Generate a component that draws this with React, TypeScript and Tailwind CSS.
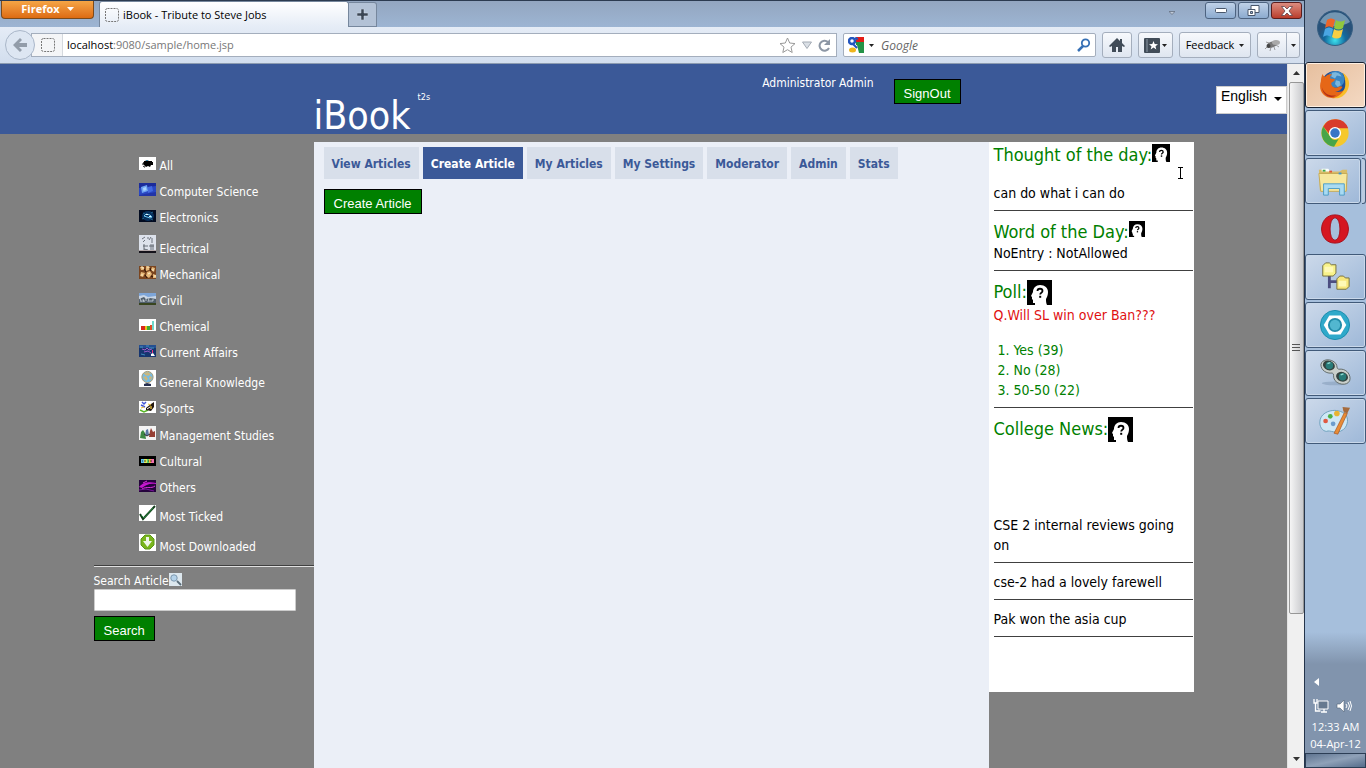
import { useState, type ReactNode } from "react";

function Thumb({ h, bg, children }: { h: number; bg: string; children: ReactNode }) {
  return (
    <svg aria-hidden="true" width={17} height={h} viewBox={`0 0 17 ${h}`} className="mb-[4px] shrink-0">
      <rect width="17" height={h} fill={bg} />
      {children}
    </svg>
  );
}

const categories: { name: string; icon: ReactNode }[] = [
  {
    name: "All",
    icon: (
      <Thumb h={13} bg="#fff">
        <path d="M6 4l2-1 2 1 3 0v1h1v3h-2l-1 2-2-1-2 1-2-2-1-2z" fill="#000" />
        <path d="M6 4L4 6v2l1 2h2M5 5l1-1" stroke="#000" strokeDasharray="2 1" fill="none" />
        <path d="M7 3.500h2" stroke="#3c9ac8" strokeWidth=".8" />
      </Thumb>
    ),
  },
  {
    name: "Computer Science",
    icon: (
      <Thumb h={13} bg="#2a48c4">
        <path d="M0 0h17v3L0 5z" fill="#1b2b9a" />
        <path d="M2 4l6-2 1 6-6 2z" fill="#6ea4f4" />
        <path d="M9 4l4-1 1 5-5 2z" fill="#4369e0" />
        <path d="M0 12l17-3v4H0z" fill="#2235a8" />
        <path d="M4 5l3-1 .5 3-3 1z" fill="#a9d2ff" />
      </Thumb>
    ),
  },
  {
    name: "Electronics",
    icon: (
      <Thumb h={12} bg="#020b20">
        <ellipse cx="9" cy="6" rx="6" ry="5" fill="#08305c" />
        <path d="M5 6l2-2 4 1 2 2-2 1-3-1z" stroke="#6bc4f2" fill="none" />
        <path d="M4 3l2 1M12 9l2 1M3 9l2-1M12 3l2-1" stroke="#2b7fae" fill="none" strokeWidth=".7" />
        <path d="M7 4h2v1H7zM10 6h2v1h-2z" fill="#e4faff" />
      </Thumb>
    ),
  },
  {
    name: "Electrical",
    icon: (
      <Thumb h={18} bg="#dde2ec">
        <path d="M5 9v6M4 11h5M8 3h2M13 3v5M12 9v6M10 11h5M14 9v6M3 4l3-2M6 5l-2 2M10 5l2-3M5 14l4 1" stroke="#4f5560" fill="none" strokeWidth=".8" />
        <path d="M0 15h17v1H0z" fill="#b4a9aa" />
        <path d="M0 16h17v2H0z" fill="#14121a" />
      </Thumb>
    ),
  },
  {
    name: "Mechanical",
    icon: (
      <Thumb h={13} bg="#7a4520">
        <path d="M1 1h4v3H2zM7 0l4 1-1 3-3 1zM13 1l3 1-1 4-3-2zM2 6l4 1-2 4-3-1zM8 6l3-1 2 3-3 4-3-2zM14 8l3 1v3h-3z" fill="#e6b878" />
        <path d="M2 1h2v2M8 1h2M14 3v2M3 8v2M9 8l2-1M15 10h2" stroke="#fff0cc" fill="none" />
        <path d="M5 3l2 3M11 2l1 3M6 9l2 3M12 10l2 1" stroke="#2d1206" />
      </Thumb>
    ),
  },
  {
    name: "Civil",
    icon: (
      <Thumb h={12} bg="#7da5d8">
        <path d="M0 3l5-1 4 2 8-1v4H0z" fill="#c8d5e5" />
        <path d="M0 6l5-2 2 2 4-1 6 1v5H0z" fill="#52606d" />
        <path d="M1 5l1 4M4 6l1 3M7 4v4M10 5l-1 4M14 6v2M2 8h4M10 8h4" stroke="#dce4e9" strokeWidth=".7" />
        <path d="M0 10h17v2H0z" fill="#39451f" />
      </Thumb>
    ),
  },
  {
    name: "Chemical",
    icon: (
      <Thumb h={12} bg="#fff">
        <path d="M2 7h4v4H2z" fill="#d8281c" />
        <path d="M6 7h2v4H6z" fill="#e7c315" />
        <path d="M8 7h3v4H8z" fill="#3daa38" />
        <path d="M11 6h2v5h-2z" fill="#e04c25" />
        <path d="M13 2h2v9h-2z" fill="#6fd8ca" />
      </Thumb>
    ),
  },
  {
    name: "Current Affairs",
    icon: (
      <Thumb h={12} bg="#16356f">
        <path d="M0 0h17v3H0z" fill="#254f91" />
        <path d="M3 4l3 1 2-2 2 2 3-1M5 7l4-1 3 2" stroke="#9b5cc8" fill="none" />
        <path d="M1 2h3M7 1h3M2 9l4 1M10 3h5" stroke="#4aa2d0" strokeWidth=".8" />
        <path d="M13 5h1v3h-1z" fill="#f1377d" />
        <path d="M12 9l2-1 2 3h-4z" fill="#fff" />
      </Thumb>
    ),
  },
  {
    name: "General Knowledge",
    icon: (
      <Thumb h={17} bg="#fff">
        <circle cx="8.500" cy="7" r="5.600" fill="#75bce6" stroke="#a99b74" />
        <path d="M5 3l4-1 3 2-3 2-3-1zM4 7l3-1 2 3-2 2zM11 6l2 1-1 3-2-1z" fill="#cab77e" />
        <path d="M5 14l3-1 4 1v2H5z" fill="#27304f" />
      </Thumb>
    ),
  },
  {
    name: "Sports",
    icon: (
      <Thumb h={12} bg="#fff">
        <path d="M3 1l2 2 2-2M2 4l4 2" stroke="#4357d6" strokeWidth="1.500" fill="none" />
        <path d="M1 9l4 2 4-2" stroke="#5cb82c" strokeWidth="1.500" fill="none" />
        <path d="M7 7l5-4 3-2v5l-3 4-5-1z" fill="#231810" />
        <path d="M2 7l3-1M9 3l3 1M12 5v3" stroke="#eec33a" strokeWidth="1.300" />
        <path d="M8 8l3-2" stroke="#fff" />
      </Thumb>
    ),
  },
  {
    name: "Management Studies",
    icon: (
      <Thumb h={14} bg="#f4f4f4">
        <path d="M1 12l1-6 2-2 2 3 1 6z" fill="#3e8945" />
        <path d="M6 10l1-6 2-1 1 6z" fill="#5a77a3" />
        <path d="M10 11l1-6 1-3 2 4 2-1v6z" fill="#963f35" />
        <path d="M5 8l3 2 3-2" stroke="#333" fill="none" />
      </Thumb>
    ),
  },
  {
    name: "Cultural",
    icon: (
      <Thumb h={10} bg="#000">
        <path d="M2 3h3v4H2z" fill="#60c4ed" />
        <path d="M5 3h3v4H5z" fill="#dfe85d" />
        <path d="M8 3h2v4H8z" fill="#60d56b" />
        <path d="M10 3h2v4h-2z" fill="#f2b743" />
        <path d="M12 3h3v4h-3z" fill="#f472af" />
        <path d="M3 5h1M6 4v2M9 5h1M12 4v2" stroke="#000" strokeWidth=".7" />
      </Thumb>
    ),
  },
  {
    name: "Others",
    icon: (
      <Thumb h={12} bg="#25043c">
        <path d="M0 7C5 1 12 2 17 3v1C10 3 7 5 3 8z" fill="#c516cf" />
        <path d="M3 9c5-3 9 0 13-3M4 3l4-2" stroke="#e02fe0" fill="none" />
        <path d="M0 10l7-1 8 2" stroke="#7c129e" fill="none" />
      </Thumb>
    ),
  },
  {
    name: "Most Ticked",
    icon: (
      <Thumb h={16} bg="#fff">
        <path d="M1 9l3 5L16 1" fill="none" stroke="#123c1a" strokeWidth="2" />
        <path d="M2 10l3 3L14 3" fill="none" stroke="#23863b" />
      </Thumb>
    ),
  },
  {
    name: "Most Downloaded",
    icon: (
      <Thumb h={17} bg="#fff">
        <path d="M6 1h5l4 4v6l-4 4H6l-4-4V5z" fill="#79b51c" stroke="#5a961a" />
        <path d="M7 3h3v4h3l-4.500 6L4 7h3z" fill="#eef6e8" />
      </Thumb>
    ),
  },
];

function HeadIcon({ size }: { size: number }) {
  return (
    <svg
      aria-hidden="true"
      width={size}
      height={size}
      viewBox="0 0 25 25"
      className={`shrink-0 ${size < 25 ? "mt-px" : ""}`}
    >
      <rect width="25" height="25" fill="#000" />
      <path d="M8 25v-2H6v-3l-1-1v-2l-1-1 2-4C6 8 9 5 13 5c5 0 8 3 8 7 0 3-1 5-2 7 0 2 0 4 1 6z" fill="#fff" />
      <path d="M10.500 11c0-3 5-3 5 0 0 2-2.300 1.500-2.300 3.500" fill="none" stroke="#000" strokeWidth="1.800" />
      <rect x="12.200" y="15.800" width="2" height="2" fill="#000" />
    </svg>
  );
}

function Heading({ children, icon }: { children: ReactNode; icon: number }) {
  return (
    <h2 className="flex items-start text-[18px] leading-[23px] text-[#008000]">
      {children}
      <HeadIcon size={icon} />
    </h2>
  );
}

const rule = "mt-[7px] border-0 border-t border-[#404040]";
const greenButton =
  "h-[25px] border border-black bg-[#008000] px-[9px] pt-[4px] font-['Liberation_Sans',sans-serif] text-[13px] leading-[19px] text-white";
const toolButton =
  "flex h-[26px] items-center justify-center rounded-[3px] border border-[#a4aebd] bg-linear-to-b from-[#f7f9fc] to-[#dfe6f0]";

function DashedPage() {
  return (
    <svg aria-hidden="true" width="14" height="14" viewBox="0 0 14 14" className="shrink-0">
      <rect x=".5" y=".5" width="13" height="13" rx="2" fill="none" stroke="#777" strokeDasharray="2 1" />
    </svg>
  );
}

function Caret() {
  return (
    <svg aria-hidden="true" width="5" height="3" viewBox="0 0 5 3" className="shrink-0">
      <path d="M0 0h5L2.500 3z" fill="#222" />
    </svg>
  );
}

function TitleBar() {
  return (
    <div className="flex h-[27px] items-start border-t border-[#2c3b50] bg-linear-to-b from-[#93a6c0] to-[#9db5d3]">
      <button className="ml-px flex h-[18px] w-[93px] items-center justify-center gap-[7px] rounded-b-[4px] border border-t-0 border-[#7b4a1c] bg-linear-to-b from-[#f5a545] to-[#dd6b11] pb-px text-[11px] font-bold text-white">
        Firefox
        <svg aria-hidden="true" width="7" height="4" viewBox="0 0 7 4"><path d="M0 0h7L3.500 4z" fill="#fff" /></svg>
      </button>
      <div className="ml-[5px] flex h-[26px] w-[250px] items-center gap-[4px] rounded-t-[3px] border border-b-0 border-[#76879d] bg-linear-to-b from-white to-[#e5ecf6] pt-px pl-[5px] text-[11px] text-black">
        <DashedPage />
        iBook - Tribute to Steve Jobs
      </div>
      <button aria-label="New tab" className="mt-px flex h-[25px] w-[28px] items-center justify-center rounded-tr-[3px] border border-l-0 border-[#76879d] bg-[#b3c2d6]">
        <svg width="11" height="11" viewBox="0 0 11 11"><path d="M4 0h3v4h4v3H7v4H4V7H0V4h4z" fill="#3b4654" stroke="#dbe3ed" strokeWidth=".5" /></svg>
      </button>
      <div className="ml-auto flex items-start gap-[2px] pt-px pr-[2px]">
        <svg aria-hidden="true" width="6" height="4" viewBox="0 0 6 4" className="mt-[9px] mr-[28px]"><path d="M0 .5h6L3 3.500z" fill="#c0cbd9" stroke="#5b6675" strokeWidth=".7" /></svg>
        <button aria-label="Minimize" className="flex h-[17px] w-[31px] items-center justify-center rounded-[3px] border border-[#4d6380] bg-linear-to-b from-[#bfd1e8] to-[#8cabcf]">
          <svg width="12" height="6" viewBox="0 0 12 6"><rect x=".5" y=".5" width="11" height="4" rx="1" fill="#fff" stroke="#48566b" /></svg>
        </button>
        <button aria-label="Restore" className="flex h-[17px] w-[31px] items-center justify-center rounded-[3px] border border-[#4d6380] bg-linear-to-b from-[#bfd1e8] to-[#8cabcf]">
          <svg width="13" height="12" viewBox="0 0 13 12"><path d="M4 .5h8v7H4z" fill="#fff" stroke="#48566b" /><path d="M1 4.500h7v6H1z" fill="#fff" stroke="#48566b" /><path d="M3.500 6.500h2v2h-2z" fill="#9ab2d0" stroke="#48566b" /></svg>
        </button>
        <button aria-label="Close" className="flex h-[17px] w-[31px] items-center justify-center rounded-[3px] border border-[#5a1d1d] bg-linear-to-b from-[#dc8c80] to-[#b93b2b]">
          <svg width="12" height="10" viewBox="0 0 12 10"><path d="M.5.5h3L6 3 8.500.5h3L8 5l3.500 4.500h-3L6 7 3.500 9.500h-3L4 5z" fill="#fff" stroke="#5f4149" strokeWidth=".8" /></svg>
        </button>
      </div>
    </div>
  );
}

function Toolbar() {
  return (
    <div className="flex h-[37px] items-center border-b border-[#8c9bb0] bg-linear-to-b from-[#e5ecf6] to-[#d2deee] pr-[4px]">
      <button aria-label="Back" className="z-10 ml-[5px] flex size-[30px] shrink-0 items-center justify-center rounded-full border border-[#aab7c9] bg-[#dde6f2]">
        <svg width="16" height="16" viewBox="0 0 16 16"><path d="M8 1L1 8l7 7 2-2-3-3h8V6H7l3-3z" fill="#929ca9" /></svg>
      </button>
      <div className="-ml-[4px] flex h-[24px] min-w-0 flex-1 items-center border border-[#a4aebd] bg-white">
        <span className="flex h-full w-[31px] shrink-0 items-center justify-end border-r border-[#d5d9de] bg-[#f4f5f7] pr-[7px]"><DashedPage /></span>
        <span className="flex-1 pt-px pl-[4px] text-[11px] text-[#777]"><span className="text-black">localhost</span>:9080/sample/home.jsp</span>
        <svg aria-hidden="true" width="17" height="17" viewBox="0 0 17 17"><path d="M8.500 1l2.200 5 5.300.6-4 3.500 1.200 5.400-4.700-2.800-4.700 2.800L5 10.100 1 6.600 6.300 6z" fill="#fff" stroke="#999" /></svg>
        <svg aria-hidden="true" width="10" height="8" viewBox="0 0 10 8" className="ml-[6px]"><path d="M.5 1h9L5 7.500z" fill="#dbe0e6" stroke="#a4abb4" /></svg>
        <svg aria-hidden="true" width="13" height="13" viewBox="0 0 13 13" className="mr-[5px] ml-[6px]"><path d="M10 3A5 5 0 1 0 11 9" fill="none" stroke="#8d97a5" strokeWidth="2" /><path d="M12 0v6H6z" fill="#8d97a5" /></svg>
      </div>
      <div className="ml-[6px] flex h-[24px] w-[253px] items-center rounded-[2px] border border-[#a4aebd] bg-white px-[4px]">
        <svg aria-hidden="true" width="16" height="16" viewBox="0 0 16 16" className="shrink-0">
          <path d="M8 0h8v5H8z" fill="#e51c16" /><path d="M8 5h8v11H8z" fill="#249347" /><path d="M0 8h9l2 8H7z" fill="#fff" />
          <circle cx="4" cy="4" r="3" fill="none" stroke="#2456be" strokeWidth="2.500" /><path d="M5 7l4 4M7 1l3 1" stroke="#2456be" strokeWidth="2" /><ellipse cx="4.500" cy="13" rx="3.500" ry="2.500" fill="#efb51c" />
        </svg>
        <span className="ml-[5px] flex"><Caret /></span>
        <input aria-label="Search Google" placeholder="Google" className="ml-[7px] min-w-0 flex-1 pt-px text-[12px] italic outline-none placeholder:text-[#666]" />
        <svg aria-hidden="true" width="14" height="14" viewBox="0 0 14 14" className="shrink-0"><circle cx="8.500" cy="5" r="3.700" fill="none" stroke="#3670b5" strokeWidth="1.800" /><path d="M6 8l-5 5" stroke="#3670b5" strokeWidth="2.500" /></svg>
      </div>
      <button aria-label="Home" className={`${toolButton} ml-[6px] w-[30px]`}>
        <svg width="16" height="14" viewBox="0 0 16 14"><path d="M8 0l3 3V1h2v4l3 3-1 1-2-1v6H9V9H7v5H3V8L1 9 0 8z" fill="#414c58" /></svg>
      </button>
      <button aria-label="Bookmarks" className={`${toolButton} ml-[6px] w-[35px] gap-[2px]`}>
        <svg width="16" height="15" viewBox="0 0 16 15"><rect width="16" height="15" rx="1" fill="#414c58" /><path d="M3 1v13" stroke="#8d99a6" /><path d="M9.500 3l1.200 3 3.300.2-2.500 2 .8 3.200-2.800-1.800-2.800 1.800.8-3.200L5 6.200 8.300 6z" fill="#fff" /></svg>
        <Caret />
      </button>
      <button className={`${toolButton} ml-[6px] w-[72px] gap-[5px] text-[11px] text-black`}>Feedback <Caret /></button>
      <div className="ml-[6px] flex">
        <button aria-label="Firebug" className={`${toolButton} w-[30px] rounded-r-none`}>
          <svg width="17" height="13" viewBox="0 0 17 13"><path d="M5 4L2 3M3 8l-2 2M7 8l-1 4M10 8l1 3M12 6l3 2" stroke="#888" strokeWidth=".8" /><ellipse cx="8" cy="5.500" rx="5" ry="2.800" fill="#777" transform="rotate(-20 8 5.500)" /><ellipse cx="12" cy="3.500" rx="4" ry="2.500" fill="#a9a9a9" /><circle cx="4.500" cy="7" r="2" fill="#444" /></svg>
        </button>
        <button aria-label="Firebug options" className={`${toolButton} -ml-px w-[14px] rounded-l-none`}><Caret /></button>
      </div>
    </div>
  );
}

function Header() {
  return (
    <header className="grid h-[70px] grid-cols-[minmax(0,1fr)_minmax(0,1100px)_minmax(0,1fr)] bg-[#3b5998] text-white">
      <div className="col-start-2 flex items-start pl-[220px]">
        <h1 className="flex items-start pt-[28px] text-[39px] leading-[48px]">
          iBook<sup className="top-0 pl-[7px] text-[9px] leading-[10px]">t2s</sup>
        </h1>
        <div className="ml-auto flex items-start gap-[20px] pt-[15px] pr-[233px]">
          <span className="text-[12px] leading-[8px]">Administrator Admin</span>
          <button className={greenButton}>SignOut</button>
        </div>
      </div>
      <div className="col-start-3 flex items-start justify-end pt-[20px]">
        <div className="relative">
          <select aria-label="Language" className="h-[28px] w-[71px] appearance-none border border-[#ccc] bg-white pb-[8px] pl-[4px] font-['Liberation_Sans',sans-serif] text-[14px] leading-[18px] text-black">
            <option>English</option>
          </select>
          <svg aria-hidden="true" width="8" height="4" viewBox="0 0 8 4" className="pointer-events-none absolute top-[13px] right-[5px]"><path d="M0 0h8L4 4z" fill="#000" /></svg>
        </div>
      </div>
    </header>
  );
}

function Sidebar() {
  return (
    <aside className="w-[220px] shrink-0 text-[12px] text-white">
      <ul className="pt-[6px] pl-[45px]">
        {categories.map((c) => (
          <li key={c.name}>
            <a href="#" className="flex min-h-[26px] items-end gap-[4px] pt-[9px] leading-[15px]">
              {c.icon}
              {c.name}
            </a>
          </li>
        ))}
      </ul>
      <hr className="mt-[10px] border-0 border-t border-b border-t-[#404040] border-b-[#e0e0e0]" />
      <form className="pt-[6px]" onSubmit={(e) => e.preventDefault()}>
        <label htmlFor="article-search" className="flex items-start leading-[16px]">
          Search Article
          <svg aria-hidden="true" width="13" height="13" viewBox="0 0 13 13"><rect width="13" height="13" fill="#dce7ee" /><circle cx="5" cy="5" r="3.200" fill="#b5d3ea" stroke="#7d98ae" /><path d="M8 8l4 4" stroke="#596b78" strokeWidth="1.800" /></svg>
        </label>
        <input id="article-search" className="block h-[22px] w-[202px] rounded-[1px] border border-[#ccc] bg-white px-[3px] text-black outline-none" />
        <button className={`${greenButton} mt-[5px]`}>Search</button>
      </form>
    </aside>
  );
}

const tabs = ["View Articles", "Create Article", "My Articles", "My Settings", "Moderator", "Admin", "Stats"];

function Main() {
  const [active, setActive] = useState("Create Article");
  return (
    <main className="min-w-0 flex-1 bg-[#ebeff7] px-[10px] pt-[5px]">
      <nav className="flex flex-wrap gap-[4px]">
        {tabs.map((t) => (
          <button
            key={t}
            onClick={() => setActive(t)}
            className={`h-[32px] px-[8px] pt-[2px] text-[12px] font-bold ${t === active ? "bg-[#3b5998] text-white" : "bg-[#d8dfea] text-[#3b5998]"}`}
          >
            {t}
          </button>
        ))}
      </nav>
      <button className={`${greenButton} mt-[10px]`}>Create Article</button>
    </main>
  );
}

function News() {
  return (
    <aside className="relative flex w-[205px] shrink-0 flex-col gap-[9px] self-start bg-white pt-px pr-px pb-[55px] pl-[5px] text-[14px] leading-[20px] text-black">
      <section>
        <Heading icon={18}>Thought of the day:</Heading>
        <p className="pt-[17px]">can do what i can do</p>
        <hr className={rule} />
      </section>
      <section>
        <Heading icon={16}>Word of the Day:</Heading>
        <p>NoEntry : NotAllowed</p>
        <hr className={rule} />
      </section>
      <section>
        <Heading icon={25}>Poll:</Heading>
        <p className="text-[#e01010]">Q.Will SL win over Ban???</p>
        <ol className="list-outside list-decimal pt-[15px] pl-[20px] text-[#008000]">
          <li>Yes (39)</li>
          <li>No (28)</li>
          <li>50-50 (22)</li>
        </ol>
        <hr className={rule} />
      </section>
      <section>
        <Heading icon={25}>College News:</Heading>
        <p className="pt-[73px]">CSE 2 internal reviews going on</p>
        <hr className={rule} />
      </section>
      <section>
        <p>cse-2 had a lovely farewell</p>
        <hr className={rule} />
      </section>
      <section>
        <p>Pak won the asia cup</p>
        <hr className={rule} />
      </section>
      <svg aria-hidden="true" width="5" height="12" viewBox="0 0 5 12" className="pointer-events-none absolute top-[25px] right-[11px]"><path d="M0 .5h5M2.500 .5v11M0 11.500h5" stroke="#000" /></svg>
    </aside>
  );
}

function ScrollBar() {
  return (
    <div aria-hidden="true" className="flex w-[17px] shrink-0 flex-col items-center border-l border-[#e3e3e3] bg-[#f0f0f0]">
      <svg width="7" height="4" viewBox="0 0 7 4" className="mt-[7px] mb-[7px] shrink-0"><path d="M0 4h7L3.500 0z" fill="#333" /></svg>
      <div className="flex w-[15px] grow-[526] basis-0 flex-col items-center justify-center gap-[2px] rounded-[2px] border border-[#979797] bg-linear-to-r from-[#f5f5f5] to-[#c9cacd]">
        <i className="h-px w-[8px] bg-[#555]" />
        <i className="h-px w-[8px] bg-[#555]" />
        <i className="h-px w-[8px] bg-[#555]" />
      </div>
      <div className="grow-[142] basis-0" />
      <svg width="7" height="4" viewBox="0 0 7 4" className="mb-[7px] shrink-0"><path d="M0 0h7L3.500 4z" fill="#333" /></svg>
    </div>
  );
}

const frame = "border border-[#415a79] bg-linear-to-br from-[#ccd9ea] to-[#9eb8d8] shadow-[inset_0_0_0_1px_#c9d8ea]";

const apps: { name: string; frame: string; art: ReactNode }[] = [
  {
    name: "Firefox",
    frame: "border border-[#172030] bg-linear-to-br from-[#e6bf9e] to-[#f4d9c3] shadow-[inset_0_0_0_1px_#fff0e2]",
    art: (
      <>
        <circle cx="17" cy="16" r="14" fill="#1d4d96" />
        <circle cx="18" cy="11" r="9" fill="#3a86c4" />
        <path d="M14 4c4-2 9 1 10 4l-5-1-2 3-4-2zM18 12l4 1 1 4-3 2-3-3z" fill="#a7d9ee" opacity=".6" />
        <path d="M4 5c0 2 1 3 3 3 2-2 4-3 7-2-2 1-3 3-2 4l5 1c0 2-3 3-4 4 0 3 2 5 5 5 3 0 4-3 7-1-2 3-4 5-8 5 6 2 13-2 13-8 1 7-6 15-15 15C4 31-1 22 2 13c0-3 1-6 2-8z" fill="#e66717" />
        <path d="M25 4c7 4 9 12 5 19-3 6-9 9-15 8 8-2 13-8 13-15 0-5-1-9-3-12z" fill="#f9bd28" />
        <path d="M3 19c2 7 8 10 15 9-4 4-14 1-15-9z" fill="#b43018" />
      </>
    ),
  },
  {
    name: "Chrome",
    frame,
    art: (
      <>
        <circle cx="17" cy="17" r="14.500" fill="#f5c82c" />
        <path d="M4.500 10A14.500 14.500 0 0 1 31 12H17c-4 0-6 4-5 7z" fill="#d83b2b" />
        <path d="M4.500 10 12 21c2 4 6 4 9 2l-5 8.500A14.500 14.500 0 0 1 4.500 10z" fill="#48a548" />
        <circle cx="17" cy="17" r="6.500" fill="#fff" />
        <circle cx="17" cy="17" r="5" fill="#3976c6" />
      </>
    ),
  },
  {
    name: "Explorer",
    frame,
    art: (
      <>
        <path d="M2 5h10l2 2h10l3-2h5v22H3z" fill="#d9bd66" />
        <path d="M2 9h30l-1 19H4z" fill="#f7e89e" stroke="#c4a954" />
        <path d="M5 4h7l2 3H5z" fill="#fff" /><path d="M6 5h3v2H6z" fill="#3da746" /><path d="M13 6h3v2h-3z" fill="#e05635" /><path d="M23 8h3v2h-3z" fill="#3b97d6" />
        <path d="M7 32V20h22v12h-5v-7H12v7z" fill="#a9dbf2" stroke="#4b9cc5" />
      </>
    ),
  },
  {
    name: "Opera",
    frame: "border border-transparent",
    art: (
      <path fillRule="evenodd" d="M17 2c19 0 19 30 0 30S-2 2 17 2zm0 3c-7 0-7 24 0 24s7-24 0-24z" fill="#d51621" stroke="#a60b16" />
    ),
  },
  {
    name: "File transfer",
    frame,
    art: (
      <>
        <path d="M11 14v15M10 22h10" stroke="#4b4d80" strokeWidth="3" />
        <path d="M4 5l3-3h4l2 2h5v9l-3 3H4z" fill="#f8f28a" stroke="#746e3c" />
        <path d="M19 19l3-3h4l2 2h4v9l-3 3H19z" fill="#f8e77b" stroke="#746e3c" />
        <path d="M6 6h9v6H6zM21 21h8v6h-8z" fill="#fff9b6" />
      </>
    ),
  },
  {
    name: "Hex tool",
    frame,
    art: (
      <>
        <circle cx="17" cy="17" r="15.500" fill="#2fa9ca" stroke="#178bac" />
        <path d="M11 7h12l6 10-6 10H11L5 17z" fill="#fff" />
        <circle cx="17" cy="17" r="6.500" fill="#52b7d0" stroke="#248ca9" strokeWidth="2" />
      </>
    ),
  },
  {
    name: "Binoculars",
    frame,
    art: (
      <>
        <ellipse cx="17" cy="28" rx="14" ry="2" fill="#8098b3" opacity=".5" />
        <path d="M2 8c1-6 11-7 16-1 2 3 0 5 3 6 7-1 12 4 12 10 0 7-11 8-16 2-3-4 0-7-3-8C8 18 2 14 2 8z" fill="#c9cfcb" stroke="#5e6766" />
        <ellipse cx="10.500" cy="9" rx="6.500" ry="5" fill="#34423f" transform="rotate(20 10.500 9)" />
        <ellipse cx="24.500" cy="21" rx="6.500" ry="5" fill="#34423f" transform="rotate(20 24.500 21)" />
        <circle cx="11" cy="9" r="4" fill="#287b78" /><circle cx="25" cy="21" r="4" fill="#287b78" />
        <path d="M9 7l3-1M23 19l3-1" stroke="#91dad1" strokeWidth="1.500" />
      </>
    ),
  },
  {
    name: "Paint",
    frame,
    art: (
      <>
        <path d="M1 17C2 7 17 2 27 9c5 4 4 13-1 17-8 6-14 0-18 2-4 0-8-5-7-11z" fill="#cfe8f5" stroke="#6c9fbc" />
        <circle cx="7" cy="17" r="2.500" fill="#df5b43" /><circle cx="12" cy="12" r="2.500" fill="#4caf45" /><circle cx="19" cy="9" r="3" fill="#e9b431" /><circle cx="15" cy="20" r="2.500" fill="#6d9dcc" />
        <path d="M16 30l11-22 3 1-10 22z" fill="#e88c37" stroke="#a5531d" strokeWidth=".7" />
        <path d="M26 7l-1-5 8 1-3 6z" fill="#a66b3c" />
      </>
    ),
  },
];

function TaskBar() {
  return (
    <aside className="flex w-[62px] shrink-0 flex-col border-l border-[#24344b] bg-[linear-gradient(to_bottom,#8497b0_0,#8497b0_62px,#a6bfdc_62px,#a6bfdc_632px,#8194ad_664px,#8194ad_100%)] font-['Open_Sans',sans-serif]">
      <button aria-label="Start" className="flex h-[62px] items-start justify-center pt-[9px] pr-[2px]">
        <svg width="38" height="38" viewBox="0 0 38 38">
          <defs>
            <radialGradient id="orb" cx=".5" cy=".85"><stop offset="0" stopColor="#3de2ed" /><stop offset=".6" stopColor="#136a9f" /><stop offset="1" stopColor="#28527a" /></radialGradient>
          </defs>
          <circle cx="19" cy="19" r="17.500" fill="url(#orb)" stroke="#375f82" />
          <path d="M4 13C10 0 28 0 34 13c-8 5-20 6-30 0z" fill="#bdd9e9" opacity=".5" />
          <path d="M11 11c3-2 5-2 8 0l-2 8c-3-2-5-2-8 0z" fill="#ed6528" />
          <path d="M20 11c3 2 6 2 9 0l-2 8c-3 2-6 2-9 0z" fill="#91c83e" />
          <path d="M9 20c3-2 5-2 8 0l-2 8c-3-2-5-2-8 0z" fill="#4aa6e3" />
          <path d="M18 20c3 2 6 2 9 0l-2 8c-3 2-6 2-9 0z" fill="#f8ce43" />
        </svg>
      </button>
      <div className="flex flex-col gap-[2px]">
        {apps.map((a) => (
          <div key={a.name} className="flex h-[46px] gap-px">
            <button aria-label={a.name} className={`flex min-w-0 flex-1 items-center justify-center rounded-[3px] pr-px ${a.frame}`}>
              <svg width="32" height="32" viewBox="0 0 34 34">{a.art}</svg>
            </button>
            {a.name === "Explorer" && <span className="w-[4px] rounded-r-[3px] border border-l-0 border-[#415a79] bg-[#bacbe0]" />}
          </div>
        ))}
      </div>
      <div className="mt-auto flex flex-col text-center text-[11px] leading-[17px] text-white">
        <svg aria-hidden="true" width="5" height="8" viewBox="0 0 5 8" className="mb-[12px] ml-[9px]"><path d="M5 0v8L0 4z" fill="#fff" /></svg>
        <div className="mb-[5px] flex items-center gap-[7px] pl-[8px]">
          <svg aria-hidden="true" width="16" height="15" viewBox="0 0 16 15"><path d="M5 3h10v8H5z" fill="#66798f" stroke="#fff" /><path d="M8 14h6M11 11v3M1 1v4h3V1M2.500 5v8h5" fill="none" stroke="#fff" strokeWidth="1.300" /></svg>
          <svg aria-hidden="true" width="16" height="14" viewBox="0 0 16 14"><path d="M1 5h3l4-4v12L4 9H1z" fill="#fff" stroke="#526377" strokeWidth=".6" /><path d="M10 5q2 2 0 4M12 3q3 4 0 8M14 2q3 5 0 10" fill="none" stroke="#fff" /></svg>
        </div>
        <span>12:33 AM</span>
        <span>04-Apr-12</span>
        <button aria-label="Show desktop" className="mt-px h-[15px] border border-[#2c3e55] bg-linear-to-br from-[#5f7490] via-[#8fa1b8] to-[#566d8b]" />
      </div>
    </aside>
  );
}

export default function App() {
  return (
    <div className="flex min-h-screen font-['DejaVu_Sans_Condensed','Noto_Sans',sans-serif]">
      <div className="flex min-w-0 flex-1 flex-col">
        <div className="font-['Open_Sans',sans-serif]">
          <TitleBar />
          <Toolbar />
        </div>
        <div className="flex flex-1">
          <div className="flex min-w-0 flex-1 flex-col bg-[#808080]">
            <Header />
            <div className="mx-auto mt-[8px] flex w-full max-w-[1100px] flex-1">
              <Sidebar />
              <Main />
              <News />
            </div>
          </div>
          <ScrollBar />
        </div>
      </div>
      <TaskBar />
    </div>
  );
}
